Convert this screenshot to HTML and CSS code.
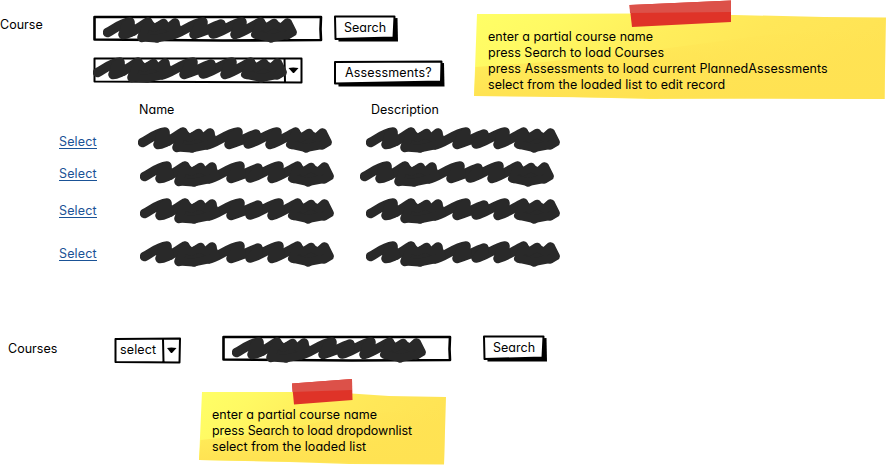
FILE: index.html
```
<!DOCTYPE html>
<html lang="en">
<head>
<meta charset="utf-8">
<title>Course search</title>
<link rel="stylesheet" href="styles.css">
</head>
<body>
<svg class="defs" width="0" height="0" aria-hidden="true">
  <defs>
    <symbol id="scribble" viewBox="0 0 195 27">
      <path d="M4.500 15.500C11 12 18 6 27 5L20 17.500C28 17 36 10 45 5L39 20.500L60.500 6.500L54 21L72 6L69 18C77 17 89 6 100 5L91 17.500C99 16 107 11 118 7L110 17C120 15 128 7 139 5L132 17.500C141 15 149 9 157.500 5L154 17.500L171 6.500L168 21L184.500 6L189 15L184 18"/>
      <path class="solid" d="M27 5L22 8L20 17L30 15ZM45 5L39 20.500L53 21.500L68 18.500L76 15L72 6L66 11L60 7L51 11ZM100 5L95 8L91 17L102 14ZM118 7L110 17L119 14ZM139 5L134 9L132 17.500L141 14ZM157.500 5L152 17.500L168 21L184 18L189 15L184 6L179 11L171 7L163 11Z"/>
    </symbol>
    <linearGradient id="paper" x1="0" y1="0" x2="1" y2=".28">
      <stop offset="0" stop-color="#ffff66"/><stop offset=".22" stop-color="#fff963"/>
      <stop offset=".5" stop-color="#ffed5b"/><stop offset=".7" stop-color="#ffe758"/><stop offset="1" stop-color="#ffe354"/>
    </linearGradient>
    <linearGradient id="fold" x1="0" y1="0" x2="0" y2="1">
      <stop offset="0" stop-color="#ffe252" stop-opacity="0"/><stop offset=".35" stop-color="#ffe252" stop-opacity=".5"/><stop offset="1" stop-color="#ffe252"/>
    </linearGradient>
  </defs>
</svg>

<main class="page">
  <div class="top">
    <section class="planner">
      <div class="row search-row">
        <span class="text label-course">Course</span>
        <div class="stack">
          <svg class="box" width="230" height="28"><path class="ink heavy" d="M1.500 2L228 2L227.500 14L228 25L130 25.500L1.500 24.500Z"/></svg>
          <svg class="mark in-input" width="195" height="27"><use href="#scribble"/></svg>
        </div>
        <div class="stack button">
          <svg class="box" width="65" height="28"><path class="shade" d="M4 6L63.500 3L64 26.500L4.500 26.500Z"/><path class="ink" d="M1 1.500L60.500 1.500L59.500 22.500L1.500 24Z"/></svg>
          <span class="text search">Search</span>
        </div>
      </div>
      <div class="row list-row">
        <div class="stack">
          <svg class="box" width="210" height="28"><path class="ink" d="M1.500 1.500L208.500 1.500L208.500 25.500L1.500 24.500ZM191.500 2L192 25"/><path class="shade" d="M195.500 11Q200 10 205.500 11L201 16H200Z"/></svg>
          <svg class="mark" width="195" height="27"><use href="#scribble"/></svg>
        </div>
        <div class="stack button">
          <svg class="box" width="112" height="28"><path class="shade" d="M4 7L110 3L110.500 26.500L4.500 26.500Z"/><path class="ink" d="M1 2L107.500 1.500L107 21.500L1 23.500Z"/></svg>
          <span class="text assess">Assessments?</span>
        </div>
      </div>
      <div class="grid head">
        <span class="text name">Name</span><span class="text desc">Description</span>
      </div>
      <div class="grid r1"><a class="link">Select</a><svg class="mark" width="195" height="27"><use href="#scribble"/></svg><svg class="mark" width="195" height="27"><use href="#scribble"/></svg></div>
      <div class="grid r2"><a class="link">Select</a><svg class="mark" width="195" height="27"><use href="#scribble"/></svg><svg class="mark" width="195" height="27"><use href="#scribble"/></svg></div>
      <div class="grid r3"><a class="link">Select</a><svg class="mark" width="195" height="27"><use href="#scribble"/></svg><svg class="mark" width="195" height="27"><use href="#scribble"/></svg></div>
      <div class="grid r4"><a class="link">Select</a><svg class="mark" width="195" height="27"><use href="#scribble"/></svg><svg class="mark" width="195" height="27"><use href="#scribble"/></svg></div>
    </section>
    <aside class="stack note">
      <svg class="box" width="413" height="101">
        <path fill="url(#paper)" d="M3 14L165 13.500L260 15L350 17L412 17.500L410.500 99L300 98.500L176 99L60 96L0 96Z"/>
        <path fill="url(#fold)" d="M1.500 67L70 62L180 50L300 34L411 28L410.500 99L176 98L0 96Z"/>
        <path fill="#df3328" d="M155.500 5L257 .5L257 22L158 27Z"/><path fill="#dc5149" d="M155.500 5L257 .5V12L156 13Z"/>
      </svg>
      <p class="note-text">
        <span class="text">enter a partial course name</span>
        <span class="text">press Search to load Courses</span>
        <span class="text wide">press Assessments to load current PlannedAssessments</span>
        <span class="text">select from the loaded list to edit record</span>
      </p>
    </aside>
  </div>

  <section class="row lookup">
    <span class="text label-courses">Courses</span>
    <div class="stack">
      <svg class="box" width="68" height="28"><path class="ink" d="M1.500 2L66 1.500L65.500 25.500L1.500 25ZM49 2L49.500 25"/><path class="shade" d="M53 11Q57 10 62.500 11L58 16H57Z"/></svg>
      <span class="text select">select</span>
    </div>
    <div class="stack">
      <svg class="box" width="230" height="28"><path class="ink heavy" d="M1.500 2L228 2L227.500 14L228 25L130 25.500L1.500 24.500Z"/></svg>
      <svg class="mark in-input" width="195" height="27"><use href="#scribble"/></svg>
    </div>
    <div class="stack button">
      <svg class="box" width="65" height="28"><path class="shade" d="M4 6L63.500 3L64 26.500L4.500 26.500Z"/><path class="ink" d="M1 1.500L60.500 1.500L59.500 22.500L1.500 24Z"/></svg>
      <span class="text search">Search</span>
    </div>
  </section>

  <aside class="stack note small">
    <svg class="box" width="248" height="88">
      <path fill="url(#paper)" d="M3 14L130 14L190 18L247 19L245 86.500L150 86L90 84L0 82Z"/>
      <path fill="url(#fold)" d="M1.500 62L60 56L150 38L246 28L245 86L0 82Z"/>
      <path fill="#df3328" d="M93 5.500L153 1L153.500 22L95 26.500Z"/><path fill="#dc5149" d="M93 5.500L153 1V12L93.500 14Z"/>
    </svg>
    <p class="note-text">
      <span class="text">enter a partial course name</span>
      <span class="text tight">press Search to load dropdownlist</span>
      <span class="text">select from the loaded list</span>
    </p>
  </aside>
</main>
</body>
</html>
```
FILE: styles.css
```
* { box-sizing: border-box; }
body {
  margin: 0;
  background: #fff;
  color: #000;
  font: 12.5px/16px Inter, "Open Sans", sans-serif;
  /* single-storey a */
  font-feature-settings: "cv11" 1;
}
.defs { position: absolute; }
.page { width: 887px; height: 465px; overflow: hidden; }
.top { display: grid; grid-template-columns: 474px 413px; height: 335px; }
.planner { width: 570px; padding-top: 15px; }
.row { display: flex; align-items: flex-start; }

.text { display: block; white-space: nowrap; letter-spacing: .03px; }
.wide { letter-spacing: .08px; }
.tight { letter-spacing: -.08px; }

.stack { display: grid; align-items: start; align-content: start; justify-items: start; }
.stack > * { grid-area: 1 / 1; }
.box { display: block; }
.mark { display: block; overflow: visible; stroke: #292929; stroke-width: 9.5; stroke-linecap: round; stroke-linejoin: round; fill: none; }
.solid { fill: #292929; stroke-width: 8; }
.ink { fill: #fff; stroke: #000; stroke-width: 2; stroke-linejoin: round; }
.heavy { stroke-width: 2.6; }
.shade { fill: #000; }

.search-row { height: 42px; }
.label-course { width: 93px; padding-top: 2px; }
.in-input { margin: 2px 0 0 10px; }
.search-row .button { margin-left: 11px; }
.search { margin: 5px 0 0 10px; }
.list-row { height: 44px; padding-left: 93px; }
.list-row .button { margin: 3px 0 0 31px; }
.assess { margin: 5px 0 0 11px; letter-spacing: .15px; }

.grid { display: grid; grid-template-columns: 81px 226px 195px; padding-left: 59px; align-items: start; }
.head { height: 26px; grid-template-columns: 232px 100px; padding: 1px 0 0 139px; }
.r1 { height: 34px; grid-template-columns: 79px 228px 195px; }
.r2 { height: 37px; grid-template-columns: 81px 220px 195px; }
.r3 { height: 43px; }
.link { justify-self: start; height: 15px; color: #1a5296; border-bottom: 1px solid #1a5296; line-height: 16px; margin-top: 5px; letter-spacing: .15px; }
.r1 .link { margin-top: 7px; }

.lookup { height: 43px; padding-left: 8px; }
.label-courses { width: 106px; padding-top: 6px; }
.lookup .stack:nth-child(2) { margin-top: 2px; }
.lookup .stack:nth-child(3) { margin-left: 40px; }
.lookup .stack:nth-child(4) { margin-left: 31px; }
.select { margin: 5px 0 0 6px; letter-spacing: .15px; }

.note-text { margin: 29px 0 0 14px; }
.small { margin-left: 199px; }
.small .note-text { margin: 29px 0 0 13px; }
```
